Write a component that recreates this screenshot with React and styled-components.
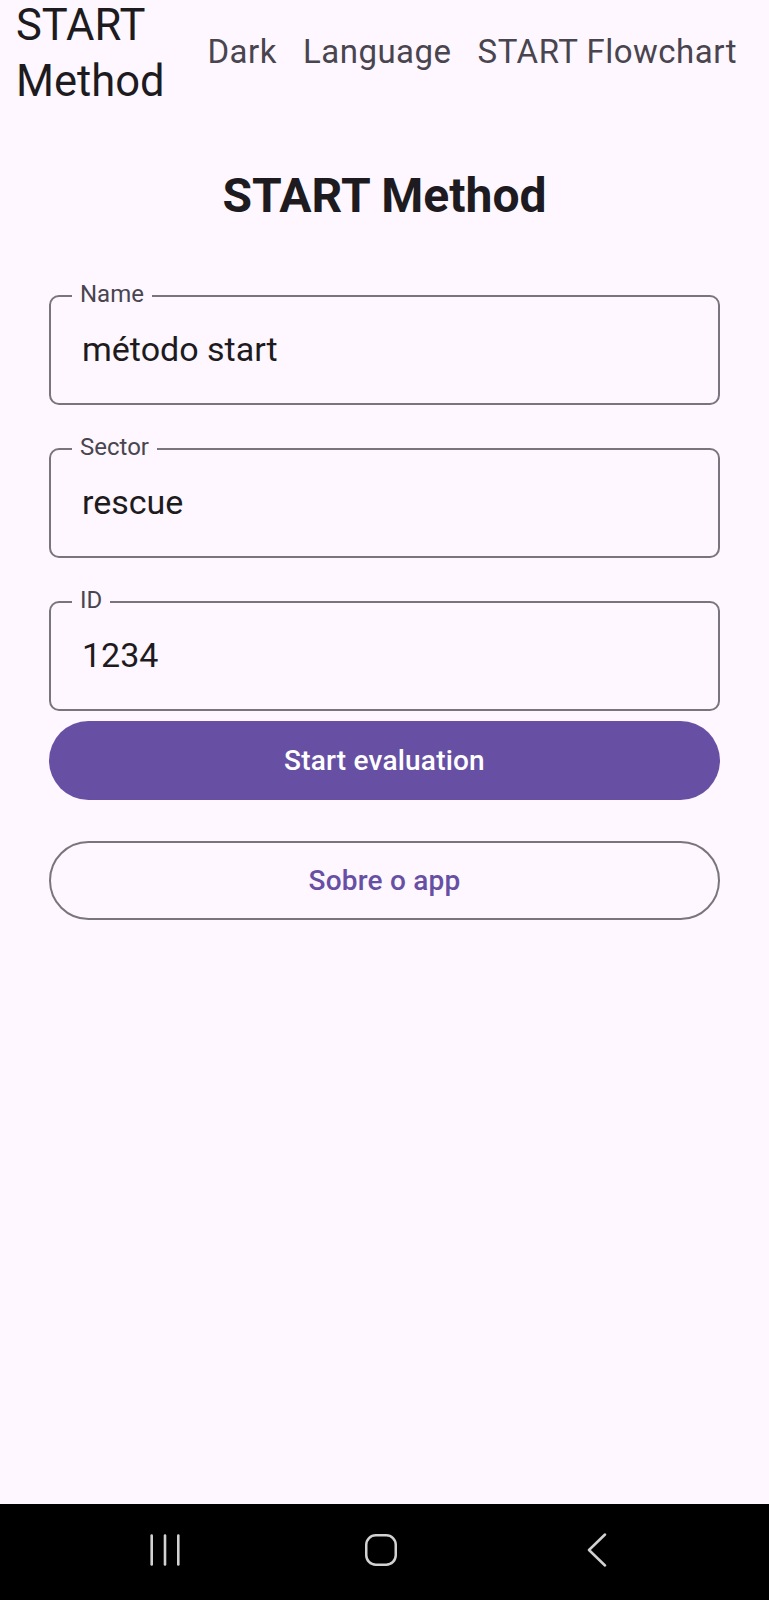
import React from 'react';
import styled, { createGlobalStyle } from 'styled-components';

const GlobalStyle = createGlobalStyle`
  *, *::before, *::after {
    box-sizing: border-box;
  }

  html, body {
    margin: 0;
    padding: 0;
    background: #fef7ff;
  }

  body {
    font-family: Roboto, "Noto Sans", "Liberation Sans", sans-serif;
    color: #1d1b20;
  }
`;

const fields = [
  { label: 'Name', value: 'método start' },
  { label: 'Sector', value: 'rescue' },
  { label: 'ID', value: '1234' },
];

const menu = ['Dark', 'Language', 'START Flowchart'];

const RecentsIcon = () => (
  <svg width="30" height="32" viewBox="0 0 30 32" fill="none" stroke="#d2d2d2" strokeWidth="2.6" strokeLinecap="round">
    <line x1="1.7" y1="1.5" x2="1.7" y2="30.5" />
    <line x1="15" y1="1.5" x2="15" y2="30.5" />
    <line x1="28.3" y1="1.5" x2="28.3" y2="30.5" />
  </svg>
);

const HomeIcon = () => (
  <svg width="32" height="32" viewBox="0 0 32 32" fill="none" stroke="#d2d2d2" strokeWidth="2.5">
    <rect x="1.25" y="1.25" width="29.5" height="29.5" rx="9.5" />
  </svg>
);

const BackIcon = () => (
  <svg width="20" height="34" viewBox="0 0 20 34" fill="none" stroke="#d2d2d2" strokeWidth="2.5" strokeLinecap="round" strokeLinejoin="round">
    <polyline points="18,1.5 2,17 18,32.5" />
  </svg>
);

const App = () => {
  return (
    <Screen>
      <GlobalStyle />
      <Main>
        <TopBar>
          <AppTitle>START Method</AppTitle>
          <Menu>
            {menu.map(item => (
              <MenuButton key={item} type="button">
                {item}
              </MenuButton>
            ))}
          </Menu>
        </TopBar>

        <Heading>START Method</Heading>

        <Form onSubmit={e => e.preventDefault()}>
          <Fields>
            {fields.map(field => (
              <Field key={field.label}>
                <Label>{field.label}</Label>
                <Input value={field.value} readOnly />
              </Field>
            ))}
          </Fields>
          <Actions>
            <Button type="submit" variant="filled">
              Start evaluation
            </Button>
            <Button type="button" variant="outlined">
              Sobre o app
            </Button>
          </Actions>
        </Form>
      </Main>

      <NavBar>
        <NavSlot>
          <RecentsIcon />
        </NavSlot>
        <NavSlot>
          <HomeIcon />
        </NavSlot>
        <NavSlot>
          <BackIcon />
        </NavSlot>
      </NavBar>
    </Screen>
  );
};

const Screen = styled.div`
  height: 1600px;
  display: flex;
  flex-direction: column;
  overflow: hidden;
  background: #fef7ff;
`;

const Main = styled.main`
  flex: 1;
  display: flex;
  flex-direction: column;
`;

const TopBar = styled.header`
  display: flex;
  align-items: center;
  margin-top: -2px;
  padding: 0 19px 0 16px;
`;

const AppTitle = styled.div`
  flex: 1;
  min-width: 0;
  font-size: 43.5px;
  line-height: 56px;
  color: #1d1b20;
`;

const Menu = styled.nav`
  display: flex;
  align-items: center;
  margin-bottom: 4px;
`;

const MenuButton = styled.button`
  background: none;
  border: none;
  padding: 12px 13px;
  font-family: inherit;
  font-size: 33px;
  line-height: 40px;
  letter-spacing: 0.5px;
  color: #49454f;
  white-space: nowrap;
`;

const Heading = styled.h1`
  margin: 58px 0 0;
  text-align: center;
  font-size: 48px;
  line-height: 56px;
  font-weight: 700;
  color: #1d1b20;
`;

const Form = styled.form`
  display: flex;
  flex-direction: column;
  padding: 0 49px;
  margin-top: 56px;
`;

const Fields = styled.div`
  display: flex;
  flex-direction: column;
  gap: 28px;
`;

const Field = styled.fieldset`
  margin: 0;
  min-width: 0;
  padding: 0 31px 34px;
  border: 2px solid #79747e;
  border-radius: 10px;
`;

const Label = styled.legend`
  margin-left: -10px;
  padding: 0 8px 4px;
  font-size: 24px;
  line-height: 28px;
  color: #49454f;
`;

const Input = styled.input`
  display: block;
  width: 100%;
  height: 40px;
  margin-top: 17px;
  padding: 0;
  border: none;
  outline: none;
  background: transparent;
  font-family: inherit;
  font-size: 34px;
  color: #1d1b20;
`;

const Actions = styled.div`
  display: flex;
  flex-direction: column;
  gap: 41px;
  margin-top: 10px;
`;

const Button = styled.button`
  height: 79px;
  border-radius: 40px;
  font-family: inherit;
  font-size: 28px;
  font-weight: 500;
  letter-spacing: 0.2px;
  background: ${p => (p.variant === 'filled' ? '#6750a4' : 'transparent')};
  color: ${p => (p.variant === 'filled' ? '#ffffff' : '#6750a4')};
  border: ${p => (p.variant === 'filled' ? 'none' : '2px solid #79747e')};
`;

const NavBar = styled.div`
  height: 96px;
  flex-shrink: 0;
  display: flex;
  justify-content: center;
  align-items: center;
  padding: 0 8px 4px 0;
  background: #000000;
`;

const NavSlot = styled.div`
  width: 216px;
  display: flex;
  justify-content: center;
  align-items: center;
`;

export default App;
